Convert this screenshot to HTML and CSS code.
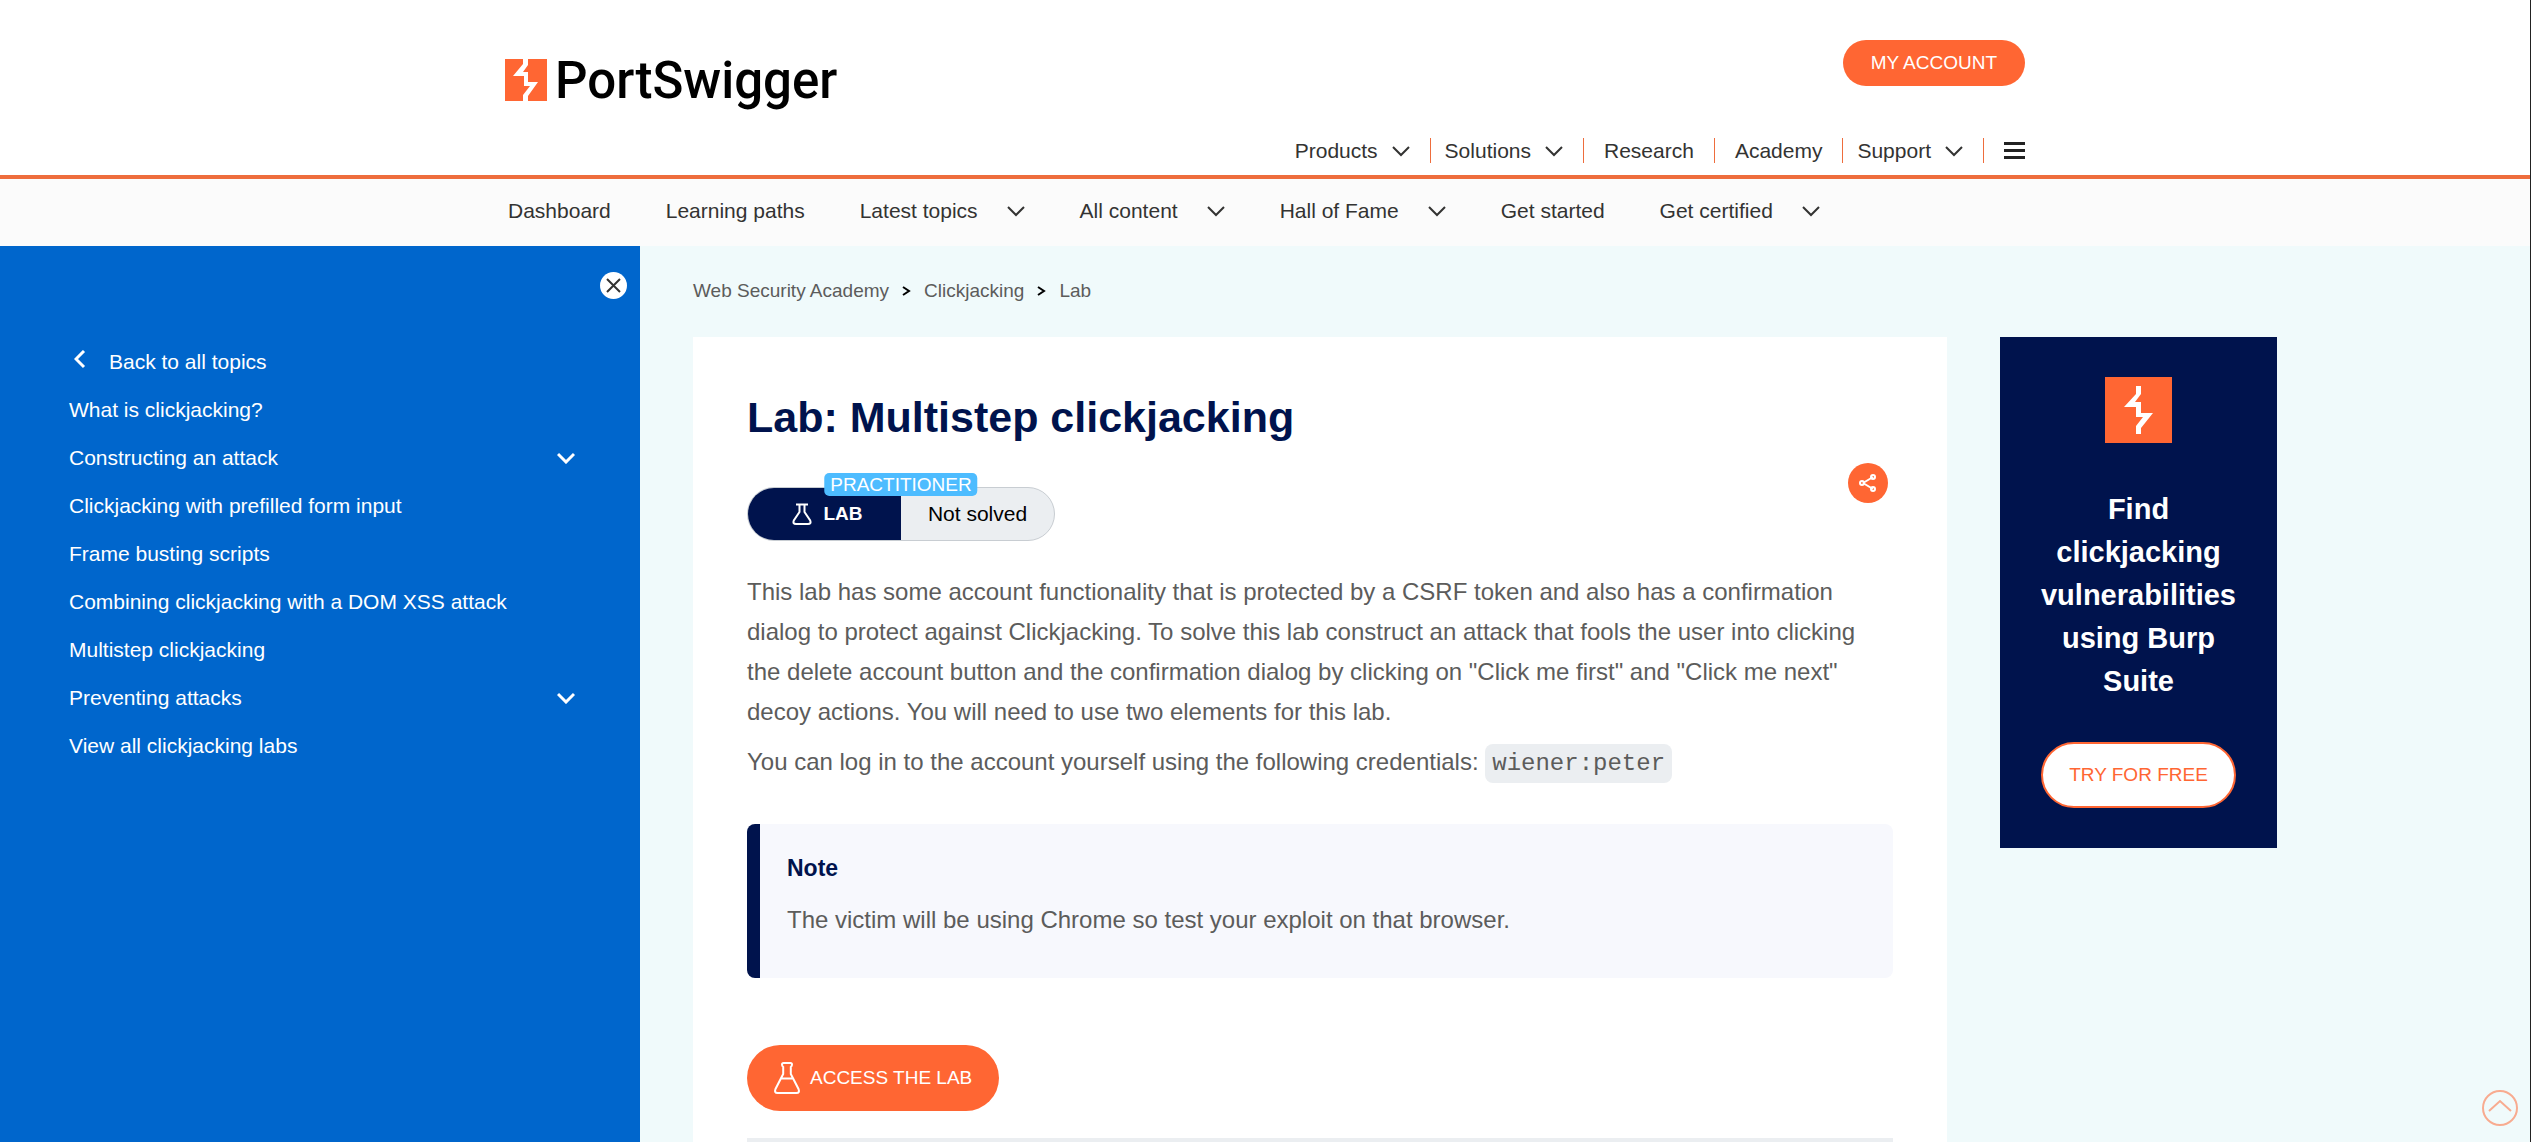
FILE: index.html
```
<!DOCTYPE html>
<html lang="en">
<head>
<meta charset="utf-8">
<meta name="viewport" content="width=device-width, initial-scale=1">
<title>Lab: Multistep clickjacking</title>
<link rel="stylesheet" href="styles.css">
</head>
<body>
<svg class="sprite" aria-hidden="true">
  <symbol id="chevron" viewBox="0 0 18 12"><path d="M1 2l8 8 8-8"/></symbol>
</svg>

<header class="header">
  <div class="container header-inner">
    <a class="logo" href="#">
      <svg class="logo-mark" viewBox="0 0 42 42"><path d="M18 0v5L8 17h11v10h6l-7 9v6h5v-5L33 23H23V13h-5l5-7V0z"/></svg>
      <span class="logo-text">PortSwigger</span>
    </a>
    <div class="header-side">
      <a class="button button-small" href="#">MY ACCOUNT</a>
      <nav class="main-nav" aria-label="Main">
        <a href="#">Products <svg class="chevron"><use href="#chevron"/></svg></a>
        <a href="#">Solutions <svg class="chevron"><use href="#chevron"/></svg></a>
        <a class="plain" href="#">Research</a>
        <a class="plain" href="#">Academy</a>
        <a href="#">Support <svg class="chevron"><use href="#chevron"/></svg></a>
        <button class="menu" type="button" aria-label="Menu"><span></span><span></span><span></span></button>
      </nav>
    </div>
  </div>
</header>

<nav class="sub-nav" aria-label="Academy">
  <div class="container sub-nav-inner">
    <a href="#">Dashboard</a>
    <a href="#">Learning paths</a>
    <a href="#">Latest topics <svg class="chevron"><use href="#chevron"/></svg></a>
    <a href="#">All content <svg class="chevron"><use href="#chevron"/></svg></a>
    <a href="#">Hall of Fame <svg class="chevron"><use href="#chevron"/></svg></a>
    <a href="#">Get started</a>
    <a href="#">Get certified <svg class="chevron"><use href="#chevron"/></svg></a>
  </div>
</nav>

<div class="page">
  <aside class="sidebar">
    <button class="close" type="button" aria-label="Close"><svg viewBox="0 0 27 27"><path d="M7 7l13 13M20 7L7 20"/></svg></button>
    <ul class="topics">
      <li><a class="back" href="#"><svg viewBox="0 0 12 24"><path d="M10 1L2 9l8 8"/></svg>Back to all topics</a></li>
      <li><a href="#">What is clickjacking?</a></li>
      <li><a href="#">Constructing an attack <svg class="chevron"><use href="#chevron"/></svg></a></li>
      <li><a href="#">Clickjacking with prefilled form input</a></li>
      <li><a href="#">Frame busting scripts</a></li>
      <li><a href="#">Combining clickjacking with a DOM XSS attack</a></li>
      <li><a href="#">Multistep clickjacking</a></li>
      <li><a href="#">Preventing attacks <svg class="chevron"><use href="#chevron"/></svg></a></li>
      <li><a href="#">View all clickjacking labs</a></li>
    </ul>
  </aside>

  <main class="main">
    <nav class="breadcrumbs" aria-label="Breadcrumb">
      <a href="#">Web Security Academy</a>
      <svg viewBox="0 0 9 10"><path d="M1 1l6 4-6 4"/></svg>
      <a href="#">Clickjacking</a>
      <svg viewBox="0 0 9 10"><path d="M1 1l6 4-6 4"/></svg>
      <a href="#">Lab</a>
    </nav>
    <div class="columns">
      <article class="card">
        <h1>Lab: Multistep clickjacking</h1>
        <div class="meta">
          <div class="status">
            <span class="level">PRACTITIONER</span>
            <span class="status-type"><svg viewBox="0 0 20 22"><path d="M4 1.500h12M7.500 2v7L1.800 17.500Q0.500 21 4 21h12q3.500 0 2.200-3.500L12.500 9V2"/></svg>LAB</span>
            <span class="status-state">Not solved</span>
          </div>
          <button class="share" type="button" aria-label="Share"><svg viewBox="0 0 20 20"><path d="M5 10l10-6M5 10l10 6"/><circle cx="4" cy="10" r="2"/><circle cx="15" cy="4" r="2"/><circle cx="15" cy="16" r="2"/></svg></button>
        </div>
        <p>This lab has some account functionality that is protected by a CSRF token and also has a confirmation dialog to protect against Clickjacking. To solve this lab construct an attack that fools the user into clicking the delete account button and the confirmation dialog by clicking on "Click me first" and "Click me next" decoy actions. You will need to use two elements for this lab.</p>
        <p>You can log in to the account yourself using the following credentials: <code>wiener:peter</code></p>
        <section class="note">
          <h2>Note</h2>
          <p>The victim will be using Chrome so test your exploit on that browser.</p>
        </section>
        <a class="button button-large" href="#"><svg viewBox="0 0 26 32"><path d="M8 2.500Q8 1 9.500 1h7Q18 1 18 2.500T16.800 5V12L24.500 27q1.500 4-2 4h-19q-3.500 0-2-4L9.200 12V5Q8 4 8 2.500zM7 16.500h12"/></svg>ACCESS THE LAB</a>
        <hr>
      </article>
      <aside class="promo">
        <svg class="promo-mark" viewBox="0 0 67 66"><path d="M31 9v8L19 30h12v10h7l-7 9v8h5v-6l12-15H36V25h-6l6-8V9z"/></svg>
        <p>Find clickjacking vulnerabilities using Burp Suite</p>
        <a class="button button-outline" href="#">TRY FOR FREE</a>
      </aside>
    </div>
  </main>
</div>

<a class="to-top" href="#" aria-label="Back to top"><svg viewBox="0 0 36 36"><circle cx="18" cy="18" r="17"/><path d="M7 21l11-10 11 10"/></svg></a>
</body>
</html>
```
FILE: styles.css
```
* {
  box-sizing: border-box;
}

body {
  margin: 0;
  min-height: 100vh;
  display: flex;
  flex-direction: column;
  border-right: 1px solid #222;
  background: #f0fafb;
  color: #333332;
  font-family: "Liberation Sans", Arial, sans-serif;
  font-size: 21px;
  line-height: 24px;
}

a {
  color: inherit;
  text-decoration: none;
}

button {
  border: 0;
  padding: 0;
  cursor: pointer;
}

svg {
  flex: none;
  fill: none;
  stroke: currentColor;
  stroke-width: 2;
}

.sprite {
  display: none;
}

.chevron {
  width: 18px;
  height: 12px;
}

.container {
  width: 100%;
  max-width: 1520px;
  margin: 0 auto;
}

.button {
  display: flex;
  align-items: center;
  width: fit-content;
  border-radius: 33px;
  background: #ff6633;
  color: #fff;
  font-size: 19px;
}

.button-small {
  padding: 11px 28px;
}

.button-large {
  gap: 10px;
  height: 66px;
  padding: 0 27px;
}

.button-large svg {
  width: 26px;
  height: 32px;
}

.button-outline {
  height: 66px;
  padding: 0 26px;
  border: 2px solid #ff6633;
  background: #fff;
  color: #ff6633;
}

.header {
  background: #fff;
  border-bottom: 4px solid #ee6d3d;
}

.header-inner {
  display: flex;
  justify-content: space-between;
  padding: 40px 0 11px;
}

.logo {
  display: flex;
  align-items: center;
  align-self: flex-start;
  gap: 8px;
  padding-top: 9px;
  color: #000;
}

.logo-mark {
  width: 42px;
  height: 42px;
  background: #ff6633;
  fill: #fff;
  stroke: none;
}

.logo-text {
  padding-top: 2px;
  font-family: Roboto, "Liberation Sans", sans-serif;
  font-size: 51px;
  font-weight: 500;
  line-height: 60px;
}

.header-side {
  display: flex;
  flex-direction: column;
  align-items: flex-end;
  gap: 52px;
}

.main-nav {
  display: flex;
  align-items: center;
  padding-bottom: 1px;
}

.main-nav a {
  display: flex;
  align-items: center;
  gap: 14px;
  height: 25px;
  padding: 0 20px 0 14px;
  border-right: 1px solid #ee6d3d;
}

.main-nav .plain {
  padding: 0 20px;
}

.menu {
  display: flex;
  flex-direction: column;
  gap: 4px;
  width: 41px;
  padding-left: 20px;
  background: none;
}

.menu span {
  height: 3px;
  background: #222;
}

.sub-nav {
  background: #fbfbfb;
}

.sub-nav-inner {
  display: flex;
  gap: 55px;
  padding: 20px 0 23px 3px;
}

.sub-nav a {
  display: flex;
  align-items: center;
  gap: 29px;
}

.page {
  flex: 1;
  display: flex;
}

.sidebar {
  flex: 0 0 640px;
  display: flex;
  flex-direction: column;
  background: #0066cc;
  color: #fff;
  padding: 26px 13px;
}

.close {
  align-self: flex-end;
  width: 27px;
  height: 27px;
  border-radius: 50%;
  background: #fff;
  color: #333332;
}

.close svg {
  display: block;
}

.topics {
  list-style: none;
  margin: 0;
  padding: 39px 52px 0 56px;
}

.topics a {
  display: flex;
  align-items: center;
  justify-content: space-between;
  height: 48px;
}

.topics svg {
  stroke-width: 3;
}

.topics .back {
  justify-content: flex-start;
  gap: 23px;
  padding-left: 5px;
}

.topics .back svg {
  width: 12px;
  height: 24px;
}

.main {
  flex: 1;
  min-width: 0;
  padding-left: 53px;
  display: flex;
  flex-direction: column;
}

.breadcrumbs {
  display: flex;
  align-items: center;
  gap: 13px;
  padding: 33px 0 34px;
  color: #5c5c5b;
  font-size: 19px;
}

.breadcrumbs svg {
  width: 9px;
  height: 10px;
  color: #000;
}

.columns {
  flex: 1;
  display: flex;
  gap: 53px;
  max-width: 1584px;
}

.card {
  flex: 1;
  padding: 52px 54px 0;
  background: #fff;
}

h1 {
  margin: 0;
  color: #00134d;
  font-size: 43px;
  line-height: 56px;
}

.meta {
  display: flex;
  justify-content: space-between;
  align-items: flex-start;
  padding: 18px 5px 31px 0;
}

.status {
  position: relative;
  display: flex;
  width: 308px;
  height: 54px;
  margin-top: 24px;
  border: 1px solid #c8cdd2;
  border-radius: 27px;
  background: #ebeef1;
  color: #000;
}

.status-type,
.status-state {
  width: 50%;
  display: flex;
  align-items: center;
  justify-content: center;
}

.status-type {
  gap: 11px;
  padding-left: 6px;
  border-radius: 26px 0 0 26px;
  background: #00134d;
  color: #fff;
  font-size: 19px;
  font-weight: bold;
}

.status-type svg {
  width: 20px;
  height: 22px;
}

.level {
  position: absolute;
  top: -15px;
  left: 50%;
  transform: translateX(-50%);
  padding: 0 6px;
  border-radius: 5px;
  background: #4dbcff;
  color: #fff;
  font-size: 19px;
  line-height: 23px;
}

.share {
  display: flex;
  align-items: center;
  justify-content: center;
  width: 40px;
  height: 40px;
  border-radius: 50%;
  background: #ff6633;
  color: #fff;
}

.share svg {
  width: 20px;
  height: 20px;
}

.card p {
  margin: 0 0 10px;
  color: #5c5c5b;
  font-size: 24px;
  line-height: 40px;
}

code {
  padding: 6px 7px;
  border-radius: 8px;
  background: #ebeef1;
  font-family: "Liberation Mono", "Courier New", monospace;
  font-size: 24px;
}

.note {
  margin: 40px 0 67px;
  padding: 24px 27px 28px;
  border-left: 13px solid #00134d;
  border-radius: 8px;
  background: #f7f8fd;
}

.note h2 {
  margin: 0 0 12px;
  color: #00134d;
  font-size: 23px;
  line-height: 40px;
}

hr {
  height: 4px;
  margin: 27px 0 0;
  border: 0;
  background: #ebeef1;
}

.promo {
  flex: 0 0 277px;
  align-self: flex-start;
  display: flex;
  flex-direction: column;
  align-items: center;
  padding: 40px 24px;
  background: #00134d;
  color: #fff;
  text-align: center;
}

.promo-mark {
  width: 67px;
  height: 66px;
  background: #ff6633;
  fill: #fff;
  stroke: none;
}

.promo p {
  margin: 45px 0 39px;
  font-size: 29px;
  font-weight: bold;
  line-height: 43px;
}

.to-top {
  position: fixed;
  right: 13px;
  bottom: 16px;
  width: 36px;
  height: 36px;
  color: #f8ab90;
}

.to-top svg {
  display: block;
}
```
